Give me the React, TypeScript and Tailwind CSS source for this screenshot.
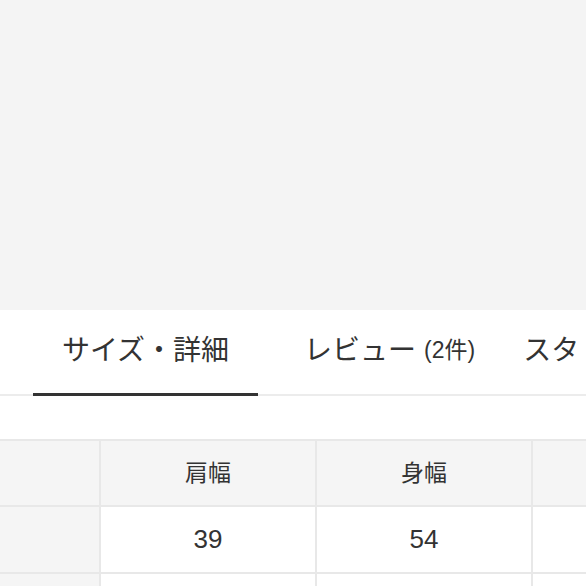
const jp = "font-['Liberation_Sans','Noto_Sans_CJK_JP',sans-serif]";

const cols = ['肩幅', '身幅', ''];
const vals = ['39', '54', ''];

export default function App() {
  return (
    <div className={`w-[586px] h-[586px] overflow-hidden bg-white text-[#333] ${jp}`}>
      <div className="h-[310px] bg-[#f4f4f4]" />

      <div className="flex h-[86px] border-b-2 border-[#ececec] whitespace-nowrap">
        <div className="ml-[33px] -mb-[2px] flex w-[225px] shrink-0 items-center justify-center border-b-[3px] border-[#333] pb-[2px] text-[28px]">
          サイズ・詳細
        </div>
        <div className="ml-[46px] flex shrink-0 items-center pb-[3px] text-[28px]">
          レビュー<span className="ml-[8px] text-[23px]">(2件)</span>
        </div>
        <div className="ml-[48px] flex shrink-0 items-center pb-[3px] text-[28px]">スタ</div>
      </div>

      <div className="mt-[43px] border-t-2 border-[#e8e8e8]">
        <div className="grid w-max grid-cols-[99px_214px_214px_214px] gap-[2px] bg-[#e8e8e8]">
          <div className="h-[64px] bg-[#f5f5f5]" />
          {cols.map((c, i) => (
            <div key={i} className="flex h-[64px] items-center justify-center bg-[#f5f5f5] text-[23px]">
              {c}
            </div>
          ))}
          <div className="h-[65px] bg-[#f5f5f5]" />
          {vals.map((v, i) => (
            <div key={i} className="flex h-[65px] items-center justify-center bg-white text-[26px]">
              {v}
            </div>
          ))}
          <div className="h-[40px] bg-[#f5f5f5]" />
          {vals.map((_, i) => (
            <div key={i} className="h-[40px] bg-white" />
          ))}
        </div>
      </div>
    </div>
  );
}
